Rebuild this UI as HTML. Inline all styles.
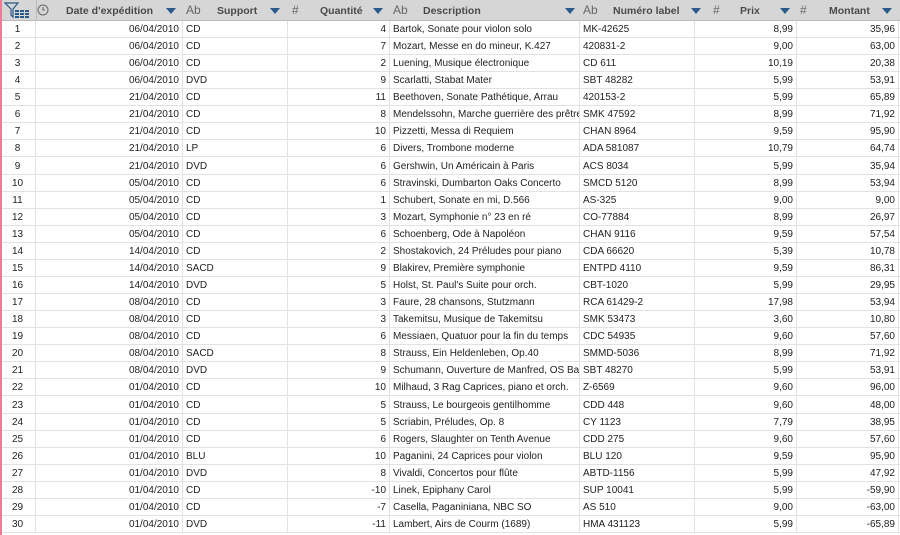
<!DOCTYPE html>
<html><head><meta charset="utf-8"><style>
*{margin:0;padding:0;box-sizing:border-box}
body{width:900px;height:535px;overflow:hidden;background:#fff;font-family:"Liberation Sans",sans-serif;font-size:10px;color:#222}
.hdr{position:absolute;left:0;top:0;width:900px;height:21px;background:#d6d6d6;border-bottom:1px solid #bbb}
.h{position:absolute;top:1px;height:21px;line-height:21px;color:#4a4a4a;font-weight:bold;font-size:10.5px}
.ic{position:absolute;top:0;height:21px;line-height:21px;color:#666;font-size:12px}
.tri{position:absolute;top:8px;width:0;height:0;border-left:5px solid transparent;border-right:5px solid transparent;border-top:6px solid #2a5a8a}
.row{position:absolute;left:0;width:900px;height:17px;border-bottom:1px solid #e2e2e2}
.c{position:absolute;top:0;height:17px;line-height:18px;white-space:nowrap;overflow:hidden;border-right:1px solid #e2e2e2;padding:0 3px}
.r{text-align:right}
.pink{position:absolute;left:0;top:0;width:2px;height:535px;background:#f07898}
</style></head><body>
<div class="hdr">
<svg style="position:absolute;left:4px;top:2px" width="28" height="18" viewBox="0 0 28 18"><path d="M1 1 L14 1 L9 7 L9 15 L7 13 L7 7 Z" fill="none" stroke="#2a5a8a" stroke-width="1.2"/><g fill="#2a5a8a"><rect x="11" y="8" width="4" height="2"/><rect x="16" y="8" width="4" height="2"/><rect x="21" y="8" width="4" height="2"/><rect x="11" y="11" width="4" height="2"/><rect x="16" y="11" width="4" height="2"/><rect x="21" y="11" width="4" height="2"/><rect x="11" y="14" width="4" height="2"/><rect x="16" y="14" width="4" height="2"/><rect x="21" y="14" width="4" height="2"/></g></svg>
<div style="position:absolute;left:36px;top:0;width:1px;height:21px;background:#bbb"></div>
<svg style="position:absolute;left:37px;top:4px" width="12" height="12"><circle cx="6" cy="6" r="5" fill="none" stroke="#666"/><path d="M6 3V6H8" stroke="#666" fill="none"/></svg>
<div class="h" style="left:66px">Date d'expédition</div><div class="tri" style="left:166px"></div>
<div class="ic" style="left:186px">Ab</div><div class="h" style="left:217px">Support</div><div class="tri" style="left:270px"></div>
<div class="ic" style="left:292px">#</div><div class="h" style="left:320px">Quantité</div><div class="tri" style="left:373px"></div>
<div class="ic" style="left:393px">Ab</div><div class="h" style="left:423px">Description</div><div class="tri" style="left:565px"></div>
<div class="ic" style="left:583px">Ab</div><div class="h" style="left:613px">Numéro label</div><div class="tri" style="left:691px"></div>
<div class="ic" style="left:713px">#</div><div class="h" style="left:740px">Prix</div><div class="tri" style="left:780px"></div>
<div class="ic" style="left:800px">#</div><div class="h" style="left:829px">Montant</div><div class="tri" style="left:882px"></div>
</div>
<div id="rows"></div>
<div class="pink"></div>
<script>
var d=[["06/04/2010","CD","4","Bartok, Sonate pour violon solo","MK-42625","8,99","35,96"],
["06/04/2010","CD","7","Mozart, Messe en do mineur, K.427","420831-2","9,00","63,00"],
["06/04/2010","CD","2","Luening, Musique électronique","CD 611","10,19","20,38"],
["06/04/2010","DVD","9","Scarlatti, Stabat Mater","SBT 48282","5,99","53,91"],
["21/04/2010","CD","11","Beethoven, Sonate Pathétique, Arrau","420153-2","5,99","65,89"],
["21/04/2010","CD","8","Mendelssohn, Marche guerrière des prêtres","SMK 47592","8,99","71,92"],
["21/04/2010","CD","10","Pizzetti, Messa di Requiem","CHAN 8964","9,59","95,90"],
["21/04/2010","LP","6","Divers, Trombone moderne","ADA 581087","10,79","64,74"],
["21/04/2010","DVD","6","Gershwin, Un Américain à Paris","ACS 8034","5,99","35,94"],
["05/04/2010","CD","6","Stravinski, Dumbarton Oaks Concerto","SMCD 5120","8,99","53,94"],
["05/04/2010","CD","1","Schubert, Sonate en mi, D.566","AS-325","9,00","9,00"],
["05/04/2010","CD","3","Mozart, Symphonie n° 23 en ré","CO-77884","8,99","26,97"],
["05/04/2010","CD","6","Schoenberg, Ode à Napoléon","CHAN 9116","9,59","57,54"],
["14/04/2010","CD","2","Shostakovich, 24 Préludes pour piano","CDA 66620","5,39","10,78"],
["14/04/2010","SACD","9","Blakirev, Première symphonie","ENTPD 4110","9,59","86,31"],
["14/04/2010","DVD","5","Holst, St. Paul's Suite pour orch.","CBT-1020","5,99","29,95"],
["08/04/2010","CD","3","Faure, 28 chansons, Stutzmann","RCA 61429-2","17,98","53,94"],
["08/04/2010","CD","3","Takemitsu, Musique de Takemitsu","SMK 53473","3,60","10,80"],
["08/04/2010","CD","6","Messiaen, Quatuor pour la fin du temps","CDC 54935","9,60","57,60"],
["08/04/2010","SACD","8","Strauss, Ein Heldenleben, Op.40","SMMD-5036","8,99","71,92"],
["08/04/2010","DVD","9","Schumann, Ouverture de Manfred, OS Bav","SBT 48270","5,99","53,91"],
["01/04/2010","CD","10","Milhaud, 3 Rag Caprices, piano et orch.","Z-6569","9,60","96,00"],
["01/04/2010","CD","5","Strauss, Le bourgeois gentilhomme","CDD 448","9,60","48,00"],
["01/04/2010","CD","5","Scriabin, Préludes, Op. 8","CY 1123","7,79","38,95"],
["01/04/2010","CD","6","Rogers, Slaughter on Tenth Avenue","CDD 275","9,60","57,60"],
["01/04/2010","BLU","10","Paganini, 24 Caprices pour violon","BLU 120","9,59","95,90"],
["01/04/2010","DVD","8","Vivaldi, Concertos pour flûte","ABTD-1156","5,99","47,92"],
["01/04/2010","CD","-10","Linek, Epiphany Carol","SUP 10041","5,99","-59,90"],
["01/04/2010","CD","-7","Casella, Paganiniana, NBC SO","AS 510","9,00","-63,00"],
["01/04/2010","DVD","-11","Lambert, Airs de Courm (1689)","HMA 431123","5,99","-65,89"]];
var cols=[[0,36,"c"],[36,147,"r"],[183,105,""],[288,102,"r"],[390,190,""],[580,115,""],[695,102,"r"],[797,102,"r"]];
var h="";
d.forEach(function(r,i){var t=Math.round(21+i*17.07);h+='<div class="row" style="top:'+t+'px">';
var v=[String(i+1)].concat(r);
cols.forEach(function(c,j){h+='<div class="c '+(c[2]=="c"?'':c[2])+'" style="left:'+c[0]+'px;width:'+c[1]+'px;'+(j==0?'text-align:center;':'')+'">'+v[j]+'</div>';});
h+='</div>';});
document.getElementById("rows").innerHTML=h;
</script>
</body></html>
